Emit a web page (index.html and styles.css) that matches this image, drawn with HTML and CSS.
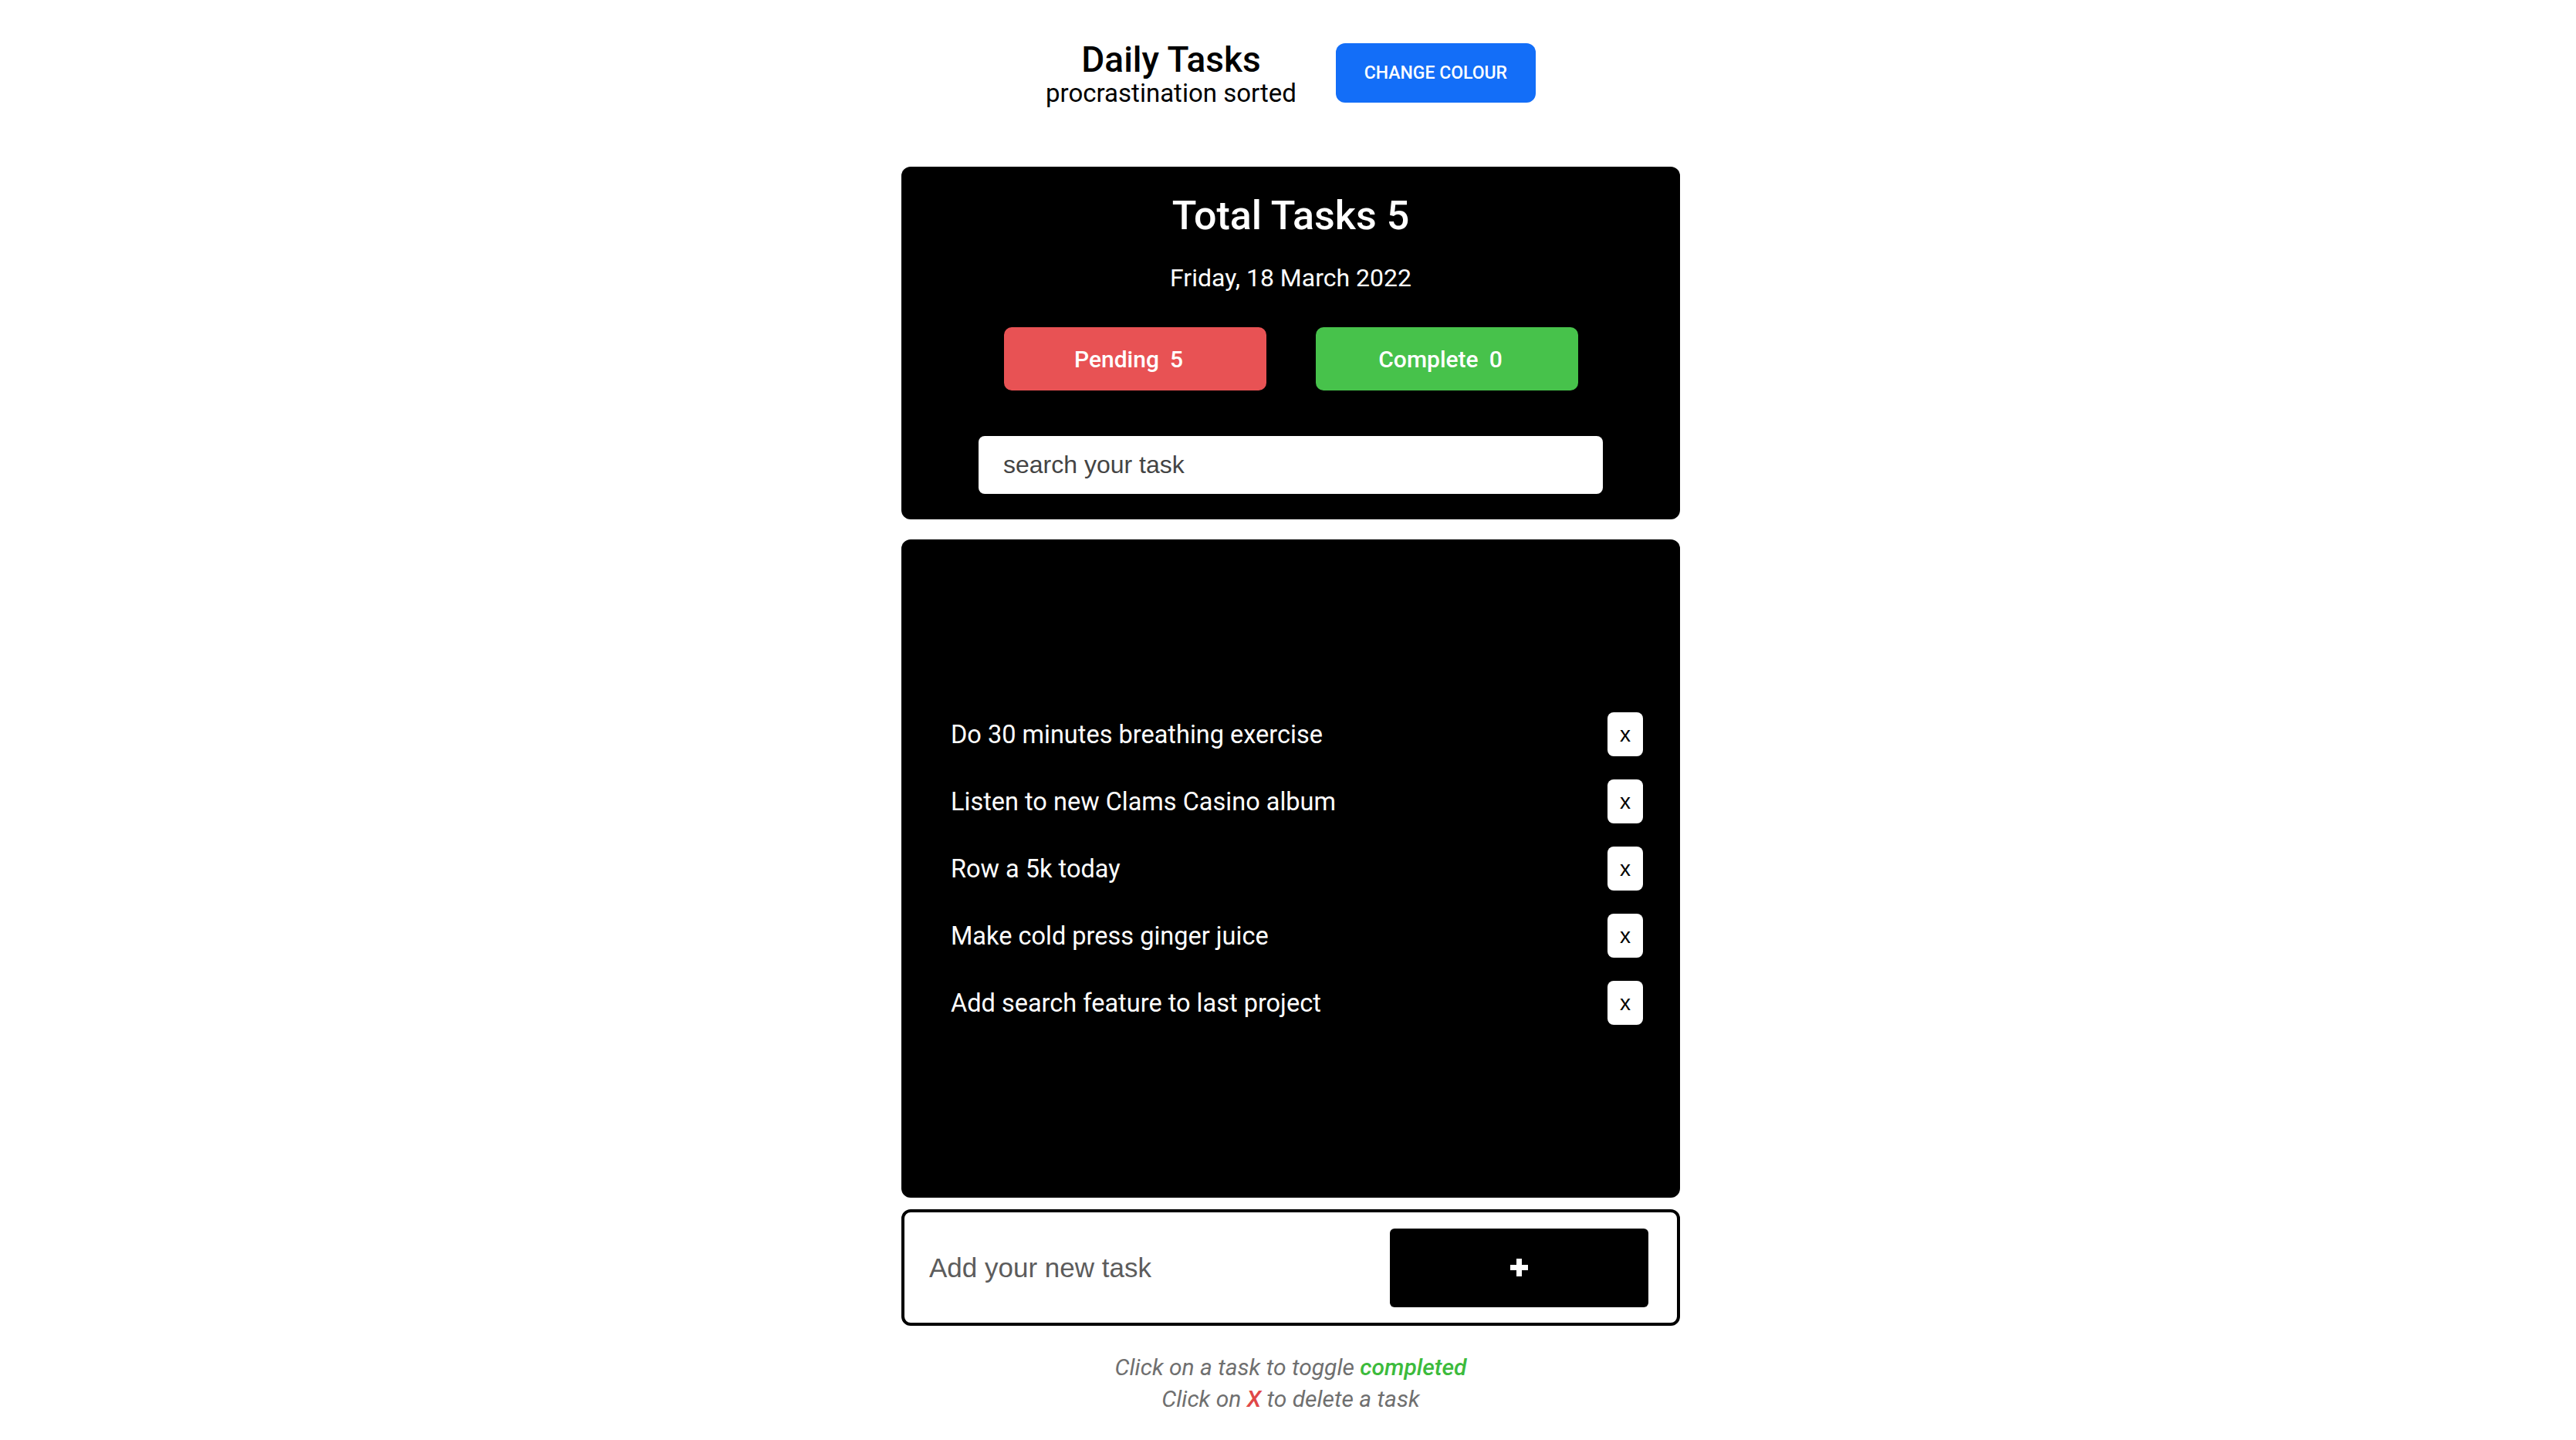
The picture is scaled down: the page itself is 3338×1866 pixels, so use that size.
FILE: index.html
```html
<!DOCTYPE html>
<html lang="en">
<head>
<meta charset="utf-8">
<title>Daily Tasks</title>
<link rel="stylesheet" href="styles.css">
</head>
<body>
<div class="page">
  <header class="top">
    <div class="brand">
      <h1 class="brand-title">Daily Tasks</h1>
      <p class="brand-sub">procrastination sorted</p>
    </div>
    <button class="btn-colour" type="button">CHANGE COLOUR</button>
  </header>

  <main class="app">
    <section class="summary">
      <h2 class="summary-title">Total Tasks 5</h2>
      <p class="summary-date">Friday, 18 March 2022</p>
      <div class="counts">
        <div class="count count-pending">Pending<span class="count-num">5</span></div>
        <div class="count count-complete">Complete<span class="count-num">0</span></div>
      </div>
      <input class="search" type="text" placeholder="search your task">
    </section>

    <section class="tasks">
      <ul class="task-list">
        <li class="task"><span class="task-text">Do 30 minutes breathing exercise</span><button class="task-del" type="button">x</button></li>
        <li class="task"><span class="task-text">Listen to new Clams Casino album</span><button class="task-del" type="button">x</button></li>
        <li class="task"><span class="task-text">Row a 5k today</span><button class="task-del" type="button">x</button></li>
        <li class="task"><span class="task-text">Make cold press ginger juice</span><button class="task-del" type="button">x</button></li>
        <li class="task"><span class="task-text">Add search feature to last project</span><button class="task-del" type="button">x</button></li>
      </ul>
    </section>

    <form class="add-form">
      <input class="add-input" type="text" placeholder="Add your new task">
      <button class="add-btn" type="button" aria-label="Add task">
        <svg class="add-icon" width="23" height="23" viewBox="0 0 23 23"><rect x="8" y="0" width="7" height="23" fill="#fff"/><rect x="0" y="8" width="23" height="7" fill="#fff"/></svg>
      </button>
    </form>

    <div class="hints">
      <p class="hint">Click on a task to toggle <span class="hint-green">completed</span></p>
      <p class="hint">Click on <span class="hint-red">X</span> to delete a task</p>
    </div>
  </main>
</div>
</body>
</html>
```

FILE: styles.css
```css
* { box-sizing: border-box; }

body {
  margin: 0;
  background: #ffffff;
  font-family: Roboto, "Noto Sans", "Liberation Sans", sans-serif;
  color: #000;
}

.page {
  padding-left: 7px;
}

.top {
  display: flex;
  justify-content: center;
  align-items: center;
  gap: 51px;
  padding-top: 52px;
}

.brand {
  display: flex;
  flex-direction: column;
  align-items: center;
}

.brand-title {
  margin: 0;
  font-size: 46px;
  font-weight: 500;
  line-height: 50px;
}

.brand-sub {
  margin: 3px 0 0;
  font-size: 33px;
  font-weight: 400;
  line-height: 32px;
}

.btn-colour {
  width: 259px;
  height: 77px;
  border: none;
  border-radius: 12px;
  background: #136ef8;
  color: #fff;
  font-family: Roboto, "Noto Sans", sans-serif;
  font-size: 23px;
  font-weight: 500;
}

.app {
  width: 1009px;
  margin: 79px auto 0;
}

.summary {
  background: #000;
  border-radius: 12px;
  padding: 39px 0 33px;
  color: #fff;
  text-align: center;
}

.summary-title {
  margin: 0;
  font-size: 52px;
  font-weight: 500;
  line-height: 50px;
}

.summary-date {
  margin: 39px 0 0;
  font-size: 32px;
  font-weight: 400;
  line-height: 32px;
}

.counts {
  display: flex;
  justify-content: center;
  gap: 64px;
  margin-top: 48px;
}

.count {
  width: 340px;
  height: 82px;
  border-radius: 10px;
  display: flex;
  align-items: center;
  justify-content: center;
  padding-right: 16px;
  font-size: 30px;
  font-weight: 500;
  color: #fff;
}

.count-num {
  margin-left: 14px;
}

.count-pending { background: #e85254; }
.count-complete { background: #47c24b; }

.search {
  display: block;
  width: 809px;
  height: 75px;
  margin: 59px auto 0;
  padding: 0 32px;
  border: none;
  border-radius: 8px;
  background: #fff;
  font-family: "Liberation Sans", Arial, sans-serif;
  font-size: 32px;
  color: #333;
  outline: none;
}

.search::placeholder { color: #444; }

.tasks {
  margin-top: 26px;
  height: 853px;
  background: #000;
  border-radius: 12px;
  display: flex;
  flex-direction: column;
  justify-content: center;
  padding: 0 48px 0 64px;
}

.task-list {
  list-style: none;
  margin: 0;
  padding: 0;
}

.task {
  height: 87px;
  display: flex;
  align-items: center;
  justify-content: space-between;
}

.task-text {
  color: #fff;
  font-size: 32.5px;
  font-weight: 400;
}

.task-del {
  width: 46px;
  height: 57px;
  border: none;
  border-radius: 8px;
  background: #fff;
  color: #000;
  font-family: "Liberation Sans", Arial, sans-serif;
  font-size: 28px;
  padding: 0;
}

.add-form {
  margin-top: 15px;
  height: 151px;
  border: 4px solid #000;
  border-radius: 12px;
  display: flex;
  align-items: center;
  padding: 0 37px 0 32px;
}

.add-input {
  flex: 1;
  min-width: 0;
  border: none;
  outline: none;
  background: transparent;
  padding: 0;
  font-family: "Liberation Sans", Arial, sans-serif;
  font-size: 35px;
  color: #333;
}

.add-input::placeholder { color: #5c5c5c; }

.add-btn {
  width: 335px;
  height: 102px;
  border: none;
  border-radius: 6px;
  background: #000;
  display: flex;
  align-items: center;
  justify-content: center;
  padding: 0;
}

.add-icon { display: block; }

.hints {
  margin-top: 33px;
  text-align: center;
}

.hint {
  margin: 0;
  font-size: 30px;
  font-style: italic;
  line-height: 41px;
  color: #6f6f6f;
}

.hint-green { color: #3cbb3c; font-weight: 500; }
.hint-red { color: #e04848; font-weight: 500; }
```
